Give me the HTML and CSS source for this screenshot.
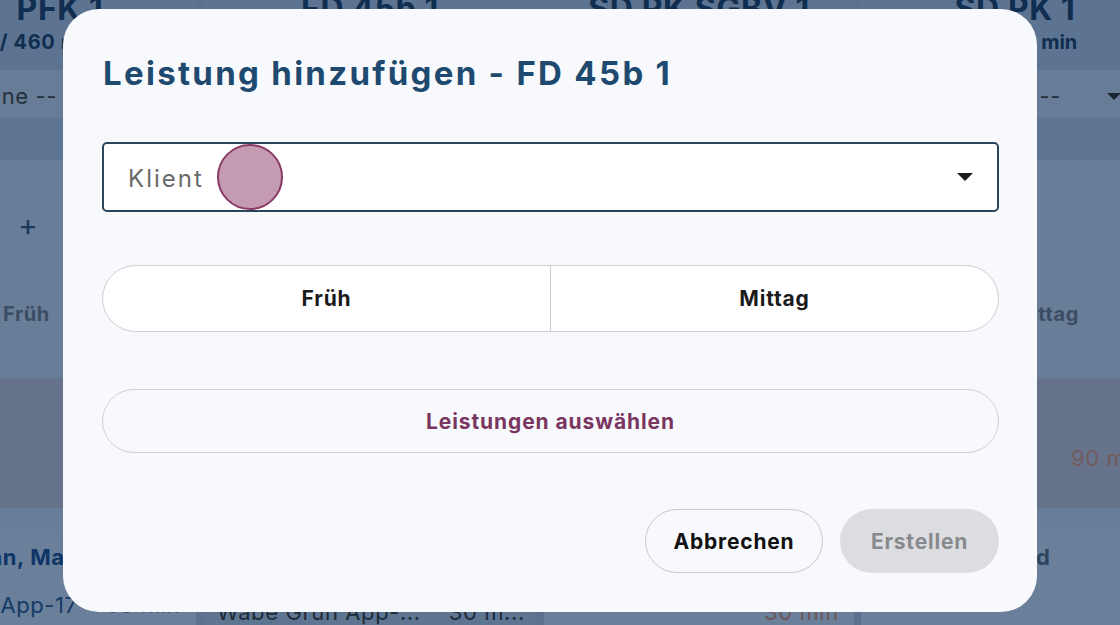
FILE: index.html
```html
<!DOCTYPE html>
<html lang="de">
<head>
<meta charset="utf-8">
<title>Leistung hinzufügen</title>
<link rel="stylesheet" href="styles.css">
</head>
<body>
<div class="app">
  <div class="board">
    <div class="col col-a">
      <div class="col-head">
        <div class="col-name">PFK 1</div>
        <div class="col-sum">240 / 460 min</div>
      </div>
      <div class="col-select"><span>-- keine --</span><span class="mini-caret"></span></div>
      <div class="col-band"></div>
      <div class="col-body">
        <div class="slot-row"><span class="plus">+</span></div>
        <div class="slot-label">Früh</div>
        <div class="block-dark"></div>
        <div class="block-gap"></div>
        <div class="entry">
          <div class="entry-name">Hermann, Max</div>
          <div class="entry-line"><span>Wabe App-17</span><span class="entry-min">65 min</span></div>
        </div>
      </div>
    </div>
    <div class="col col-b">
      <div class="col-head">
        <div class="col-name">FD 45b 1</div>
        <div class="col-sum">120 / 460 min</div>
      </div>
      <div class="col-select"><span>-- keine --</span><span class="mini-caret"></span></div>
      <div class="col-band"></div>
      <div class="col-body">
        <div class="slot-row"><span class="plus">+</span></div>
        <div class="slot-label">Früh</div>
        <div class="block-dark"></div>
        <div class="block-gap"></div>
        <div class="entry entry-dark">
          <div class="entry-name">Schulz, Anna</div>
          <div class="entry-line"><span>Wabe Grün App-...</span><span class="entry-min plain">30 m...</span></div>
        </div>
      </div>
    </div>
    <div class="col col-c">
      <div class="col-head">
        <div class="col-name">SD PK SGBV 1</div>
        <div class="col-sum">90 / 460 min</div>
      </div>
      <div class="col-select"><span>-- keine --</span><span class="mini-caret"></span></div>
      <div class="col-band"></div>
      <div class="col-body">
        <div class="slot-row"><span class="plus">+</span></div>
        <div class="slot-label">Mittag</div>
        <div class="block-dark"></div>
        <div class="block-gap"></div>
        <div class="entry">
          <div class="entry-name">Wagner, Paul</div>
          <div class="entry-line"><span class="entry-right">30 min</span></div>
        </div>
      </div>
    </div>
    <div class="col col-d">
      <div class="col-head">
        <div class="col-name">SD PK 1</div>
        <div class="col-sum">90 / 460 <span class="sum-unit">min</span></div>
      </div>
      <div class="col-select"><span>-- keine --</span><span class="mini-caret"></span></div>
      <div class="col-band"></div>
      <div class="col-body">
        <div class="slot-row"><span class="plus">+</span></div>
        <div class="slot-label">Mittag</div>
        <div class="block-dark"><span class="block-min">90 min</span></div>
        <div class="block-gap"></div>
        <div class="entry">
          <div class="entry-name">Wald</div>
        </div>
      </div>
    </div>
  </div>

  <div class="dialog" role="dialog" aria-labelledby="dlg-title">
    <h1 class="dialog-title" id="dlg-title">Leistung hinzufügen - FD 45b 1</h1>
    <div class="select">
      <span class="select-placeholder">Klient</span>
      <span class="select-caret"></span>
    </div>
    <div class="toggle">
      <button class="toggle-btn">Früh</button>
      <button class="toggle-btn">Mittag</button>
    </div>
    <button class="outline-btn">Leistungen auswählen</button>
    <div class="dialog-actions">
      <button class="btn btn-cancel">Abbrechen</button>
      <button class="btn btn-create" disabled>Erstellen</button>
    </div>
  </div>

  <div class="touch"></div>
</div>
</body>
</html>
```
FILE: styles.css
```css
* { box-sizing: border-box; }

html, body {
  margin: 0;
  padding: 0;
}

body {
  width: 1120px;
  height: 625px;
  overflow: hidden;
  background: #5d7491;
  font-family: Inter, "Open Sans", "Liberation Sans", sans-serif;
}

.app {
  position: relative;
  width: 1120px;
  height: 625px;
  overflow: hidden;
}

/* ---------- background board (dimmed) ---------- */
.board {
  display: flex;
  gap: 7px;
  margin-left: -76px;
  height: 625px;
  background: #5a7290;
  white-space: nowrap;
  letter-spacing: 0.6px;
}

.col {
  display: flex;
  flex-direction: column;
  flex: none;
  background: #687d97;
}
.col-a { width: 272px; }
.col-b { width: 334px; }
.col-c { width: 310px; }
.col-d { width: 308px; }

.col-head {
  height: 70px;
  background: #5c7391;
  display: flex;
  flex-direction: column;
  align-items: center;
  color: #0f2e50;
  font-weight: 700;
}
.col-name {
  font-size: 32px;
  line-height: 32px;
  margin-top: -7px;
}
.col-sum {
  font-size: 20px;
  margin-top: 5px;
}
.sum-unit {
  margin-left: 12px;
}

.col-select {
  height: 48px;
  background: #677c96;
  display: flex;
  align-items: center;
  justify-content: space-between;
  padding: 4px 14px 0 30px;
  color: #24303d;
  font-size: 22px;
}
.mini-caret {
  width: 0;
  height: 0;
  border-left: 7px solid transparent;
  border-right: 7px solid transparent;
  border-top: 7px solid #1b2531;
}

.col-band {
  height: 42px;
  background: #5d7592;
}

.col-body {
  flex: 1;
  display: flex;
  flex-direction: column;
}

.slot-row {
  height: 130px;
  display: flex;
  align-items: center;
  padding-left: 94px;
  color: #1c3a5c;
  font-size: 30px;
}
.slot-label {
  height: 88px;
  padding-left: 79px;
  padding-top: 12px;
  color: #3b4d62;
  font-weight: 700;
  font-size: 20px;
}
.block-dark {
  height: 130px;
  background: #66738a;
  display: flex;
  align-items: center;
  padding: 30px 0 0 210px;
}
.block-min {
  color: #735b5e;
  font-size: 22px;
}
.block-gap {
  height: 22px;
}
.entry {
  flex: 1;
  background: #6a809a;
  padding: 14px 0 0 40px;
}
.entry-dark {
  background: #5e7591;
}
.entry-name {
  color: #0e3566;
  font-weight: 700;
  font-size: 22px;
}
.entry-line {
  display: flex;
  gap: 28px;
  margin-top: 22px;
  color: #143a66;
  font-size: 22px;
}
.entry-min { color: #2d5a8a; }
.entry-min.plain { color: #1e2a37; }
.entry-right { margin-left: 180px; color: #6f5557; }

.col-a .col-sum { margin-right: 68px; }
.col-a .col-select { padding-left: 18px; }
.col-a .entry { padding-left: 8px; }
.col-a .entry-name { margin-left: -18px; }
.col-b .entry { padding-left: 14px; }
.col-b .entry-line { color: #1e2a37; margin-top: 46px; }
.col-b .entry-name { visibility: hidden; }
.col-c .entry-name { visibility: hidden; }
.col-c .entry-line { margin-top: 46px; }
.col-d .slot-label { padding-left: 152px; }
.col-d .entry { padding-left: 133px; }
.col-d .entry-name { color: #2e4560; }
.col-d .col-select { padding-left: 85px; padding-right: 48px; }
.col-d .col-sum { margin-left: -12px; letter-spacing: 0; }

/* ---------- dialog ---------- */
.dialog {
  position: absolute;
  left: 63px;
  top: 9px;
  width: 974px;
  height: 603px;
  background: #f7f9fc;
  border-radius: 36px;
  padding: 44px 38px 39px 39px;
  display: flex;
  flex-direction: column;
}

.dialog-title {
  margin: 0;
  font-size: 33px;
  line-height: 40px;
  font-weight: 700;
  letter-spacing: 2.3px;
  color: #1f4a70;
  padding-left: 1px;
  white-space: nowrap;
}

.select {
  margin-top: 49px;
  height: 70px;
  background: #ffffff;
  border: 2.5px solid #2b455c;
  border-radius: 5px;
  display: flex;
  align-items: center;
  justify-content: space-between;
  padding: 0 24px 0 24px;
}
.select-placeholder {
  font-size: 24px;
  letter-spacing: 2px;
  color: #6a6a6a;
  padding-top: 2px;
}
.select-caret {
  width: 0;
  height: 0;
  border-left: 8px solid transparent;
  border-right: 8px solid transparent;
  border-top: 8px solid #1c1c1c;
}

.toggle {
  margin-top: 53px;
  height: 67px;
  display: flex;
  background: #ffffff;
  border: 1px solid #cdced3;
  border-radius: 34px;
  overflow: hidden;
}
.toggle-btn {
  flex: 1;
  border: none;
  background: transparent;
  font-family: inherit;
  font-size: 21px;
  letter-spacing: 0.8px;
  font-weight: 700;
  color: #1a1a1a;
  padding: 0;
}
.toggle-btn + .toggle-btn {
  border-left: 1px solid #cdced3;
}

.outline-btn {
  margin-top: 57px;
  height: 64px;
  border: 1px solid #cfd0d5;
  border-radius: 32px;
  background: transparent;
  font-family: inherit;
  font-size: 21px;
  letter-spacing: 0.9px;
  font-weight: 700;
  color: #7a3560;
}

.dialog-actions {
  margin-top: auto;
  display: flex;
  justify-content: flex-end;
  gap: 17px;
}
.btn {
  height: 64px;
  border-radius: 32px;
  font-family: inherit;
  font-size: 21px;
  letter-spacing: 0.8px;
  font-weight: 700;
  padding: 0;
}
.btn-cancel {
  width: 178px;
  border: 1px solid #c9cacf;
  background: transparent;
  color: #111111;
}
.btn-create {
  width: 159px;
  border: none;
  background: #dcdde1;
  color: #88898d;
}

/* ---------- touch indicator ---------- */
.touch {
  position: absolute;
  left: 217px;
  top: 144px;
  width: 66px;
  height: 66px;
  border-radius: 50%;
  background: #c49bb1;
  border: 2.5px solid #8a3a66;
}
```
